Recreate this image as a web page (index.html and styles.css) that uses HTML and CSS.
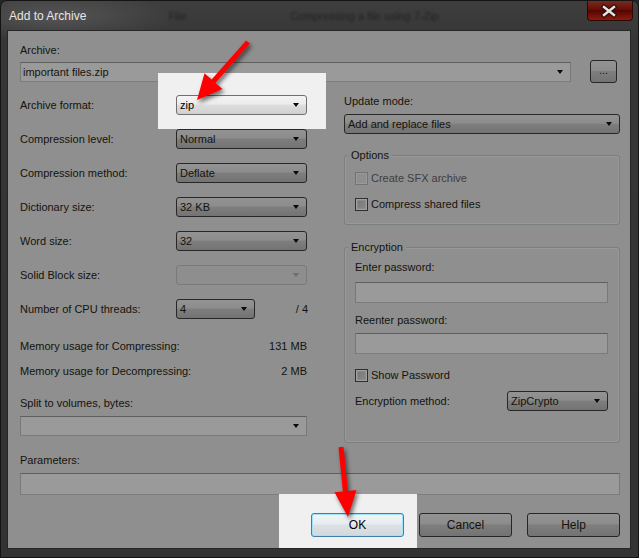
FILE: index.html
```html
<!DOCTYPE html>
<html lang="en">

<head>
    <meta charset="UTF-8">
    <title>Add to Archive</title>
    <link rel="stylesheet" href="styles.css">
</head>

<body>
    <div class="window">
        <div class="titlebar">
            <span class="title">Add to Archive</span>
            <span class="ghost ghost-file">File</span>
            <span class="ghost ghost-task">Compressing a file using 7-Zip</span>
            <div class="close">
                <svg width="46" height="20" viewBox="0 0 46 20">
                    <path d="M18 6 L28 14 M28 6 L18 14" stroke="#2a0a06" stroke-width="4.5" stroke-linecap="square"/>
                    <path d="M18 6 L28 14 M28 6 L18 14" stroke="#e4e4e4" stroke-width="2.4" stroke-linecap="square"/>
                </svg>
            </div>
        </div>

        <div class="client">
            <div class="label">Archive:</div>
            <div class="archive-row">
                <div class="combo edit archive-path">important files.zip</div>
                <div class="btn browse">...</div>
            </div>

            <div class="columns">
                <div class="col-left">
                    <div class="settings">
                        <span>Archive format:</span>
                        <div class="combo lit">zip</div>
                        <span>Compression level:</span>
                        <div class="combo">Normal</div>
                        <span>Compression method:</span>
                        <div class="combo">Deflate</div>
                        <span>Dictionary size:</span>
                        <div class="combo">32 KB</div>
                        <span>Word size:</span>
                        <div class="combo">32</div>
                        <span>Solid Block size:</span>
                        <div class="combo disabled"></div>
                        <span>Number of CPU threads:</span>
                        <div class="threads">
                            <div class="combo small">4</div>
                            <span>/ 4</span>
                        </div>
                    </div>
                    <div class="info-row first"><span>Memory usage for Compressing:</span><span>131 MB</span></div>
                    <div class="info-row"><span>Memory usage for Decompressing:</span><span>2 MB</span></div>
                    <div class="label split-label">Split to volumes, bytes:</div>
                    <div class="combo edit split"></div>
                </div>

                <div class="col-right">
                    <div class="label update-label">Update mode:</div>
                    <div class="combo update">Add and replace files</div>

                    <div class="group options">
                        <div class="group-title">Options</div>
                        <div class="check-row first"><span class="check disabled"></span><span class="muted">Create SFX archive</span></div>
                        <div class="check-row"><span class="check"></span><span>Compress shared files</span></div>
                    </div>

                    <div class="group encryption">
                        <div class="group-title">Encryption</div>
                        <div class="label pw-label">Enter password:</div>
                        <div class="field"></div>
                        <div class="label pw-label again">Reenter password:</div>
                        <div class="field second"></div>
                        <div class="check-row show-pw"><span class="check"></span><span>Show Password</span></div>
                        <div class="method-row">
                            <span>Encryption method:</span>
                            <div class="combo method">ZipCrypto</div>
                        </div>
                    </div>
                </div>
            </div>

            <div class="label params-label">Parameters:</div>
            <div class="field params"></div>

            <div class="buttons">
                <div class="btn lit">OK</div>
                <div class="btn">Cancel</div>
                <div class="btn">Help</div>
            </div>
        </div>

        <div class="highlight hl-format"></div>
        <div class="highlight hl-ok"></div>

        <svg class="arrows" width="639" height="558" viewBox="0 0 639 558">
            <polygon fill="#ff0000" points="249.9,43.6 215.4,82.9 222.5,89.1 197,100 204.5,73.3 211.6,79.5 246.1,40.4"/>
            <polygon fill="#ff0000" points="343.5,446.8 347.9,490.9 356.4,490 348,517 334.5,492.2 342.9,491.4 338.5,447.3"/>
        </svg>
    </div>
</body>

</html>
```

FILE: styles.css
```css
body {
    margin: 0;
    background-color: #262626;
    font-family: 'Liberation Sans', Arial, sans-serif;
    font-size: 11px;
    color: #15130c;
}

.window {
    position: relative;
    width: 639px;
    height: 558px;
    box-sizing: border-box;
    padding: 0 7px 8px 6px;
    border: 1px solid #141414;
    border-radius: 7px 7px 0 0;
    background:
        radial-gradient(ellipse 120px 26px at 55px 16px, rgba(255, 255, 255, 0.13), transparent),
        linear-gradient(#3e3e3e, #363636 40px, #333333);
}

.titlebar {
    height: 29px;
    display: flex;
    align-items: center;
}

.title {
    padding-left: 2px;
    font-size: 12px;
    color: #e6e6e6;
}

.ghost {
    color: #232323;
    filter: blur(1.3px);
}

.ghost-file {
    margin-left: 82px;
}

.ghost-task {
    margin-left: 104px;
}

.close {
    align-self: flex-start;
    margin-left: auto;
    margin-right: -2px;
    width: 46px;
    height: 20px;
    box-sizing: border-box;
    border: 1px solid #2b0805;
    border-top: none;
    border-radius: 0 0 4px 4px;
    background: linear-gradient(#7a2a20, #650e06 45%, #560400 50%, #8c1c0c);
    display: flex;
    align-items: center;
    justify-content: center;
}

.close svg {
    display: block;
    margin-left: -2px;
}

.client {
    height: 519px;
    box-sizing: border-box;
    border: 1px solid #262626;
    background-color: #8f8f8f;
    padding: 13px 10px 11px 12px;
}

.label {
    line-height: 13px;
}

.archive-row {
    display: flex;
    align-items: center;
    height: 23px;
    margin-top: 3px;
}

/* combo boxes */
.combo {
    position: relative;
    height: 20px;
    box-sizing: border-box;
    padding-left: 3px;
    line-height: 18px;
    border: 1px solid #272727;
    border-radius: 3px;
    background: linear-gradient(#939393, #8c8c8c 45%, #7e7e7e 50%, #737373);
    white-space: nowrap;
}

.combo::after {
    content: '';
    position: absolute;
    right: 7px;
    top: 7px;
    border-left: 3.5px solid transparent;
    border-right: 3.5px solid transparent;
    border-top: 4px solid #0a0a0a;
}

.combo.lit {
    z-index: 2;
    color: #000;
    border-color: #707070;
    background: linear-gradient(#f4f4f4, #ececec 45%, #dedede 50%, #d0d0d0);
}

.combo.edit {
    border-radius: 0;
    border-color: #5f5f5f #787878 #7c7c7c;
    background: #9a9a9a;
    padding-left: 2px;
}

.combo.disabled {
    border-color: #7a7a7a;
    background: #8e8e8e;
}

.combo.disabled::after {
    border-top-color: #6c6c6c;
}

.archive-path {
    width: 551px;
}

.field {
    height: 21px;
    box-sizing: border-box;
    border: 1px solid;
    border-color: #5f5f5f #787878 #7c7c7c;
    background: #9a9a9a;
}

/* buttons */
.btn {
    position: relative;
    box-sizing: border-box;
    height: 24px;
    width: 93px;
    line-height: 22px;
    text-align: center;
    border: 1px solid #262626;
    border-radius: 3px;
    background: linear-gradient(#939393, #8c8c8c 45%, #7e7e7e 50%, #737373);
    font-size: 12px;
}

.btn.lit {
    z-index: 2;
    color: #000;
    border-color: #3c7fb1;
    box-shadow: inset 0 0 0 1px #9fe3f9;
    background: linear-gradient(#f2f5f7, #e7ecef 45%, #dbe1e4 50%, #d2d8db);
}

.browse {
    width: 27px;
    height: 23px;
    line-height: 19px;
    margin-left: auto;
    margin-right: 3px;
    font-size: 11px;
}

.columns {
    display: grid;
    grid-template-columns: 288px 1fr;
    column-gap: 36px;
}

.settings {
    display: grid;
    grid-template-columns: 156px 131px;
    row-gap: 14px;
    align-items: center;
    margin-top: 12px;
}

.threads {
    display: flex;
    align-items: center;
    justify-content: space-between;
    width: 132px;
}

.combo.small {
    width: 79px;
}

.info-row {
    display: flex;
    justify-content: space-between;
    width: 287px;
    line-height: 13px;
    margin-top: 12px;
}

.info-row.first {
    margin-top: 21px;
}

.split-label {
    margin-top: 19px;
}

.split {
    margin-top: 6px;
    width: 287px;
}

.update-label {
    margin-top: 12px;
}

.update {
    margin-top: 6px;
}

/* group boxes */
.group {
    border: 1px solid #7a7f82;
    border-radius: 3px;
    box-shadow: inset 0 0 0 1px #999999;
    padding: 0 11px 12px 10px;
}

.group-title {
    width: fit-content;
    margin: -7px 0 0 -7px;
    padding: 0 3px;
    line-height: 13px;
    background-color: #8f8f8f;
}

.options {
    margin-top: 21px;
}

.encryption {
    margin-top: 22px;
    padding-bottom: 31px;
}

.check-row {
    display: flex;
    align-items: center;
    gap: 3px;
    height: 16px;
    margin-top: 10px;
}

.check-row.first {
    margin-top: 8px;
}

.check {
    width: 13px;
    height: 13px;
    box-sizing: border-box;
    border: 1px solid #2e2e2e;
    background: linear-gradient(135deg, #747474, #8c8c8c);
    box-shadow: inset 0 0 0 1px #a0a0a0, inset 0 0 0 2px #8a8a8a;
}

.check.disabled {
    border-color: #737373;
    background: #8f8f8f;
    box-shadow: inset 0 0 0 1px #9a9a9a;
}

.muted {
    color: #3e3e3e;
}

.pw-label {
    margin-top: 7px;
}

.pw-label.again {
    margin-top: 11px;
}

.encryption .field {
    margin-top: 8px;
}

.encryption .field.second {
    margin-top: 6px;
}

.show-pw {
    margin-top: 13px;
}

.method-row {
    display: flex;
    align-items: center;
    margin-top: 8px;
}

.combo.method {
    width: 101px;
    margin-left: auto;
}

.params-label {
    margin-top: 11px;
}

.field.params {
    margin-top: 6px;
    height: 22px;
}

.buttons {
    display: flex;
    justify-content: flex-end;
    gap: 15px;
    margin-top: 18px;
}

/* annotations */
.highlight {
    position: absolute;
    z-index: 1;
    background-color: #f0f0f0;
}

.hl-format {
    left: 157px;
    top: 72px;
    width: 168px;
    height: 56px;
}

.hl-ok {
    left: 278px;
    top: 493px;
    width: 138px;
    height: 54px;
}

.arrows {
    position: absolute;
    left: -1px;
    top: -1px;
    z-index: 3;
    pointer-events: none;
    filter: drop-shadow(2px 3px 2px rgba(0, 0, 0, 0.55));
}
```
